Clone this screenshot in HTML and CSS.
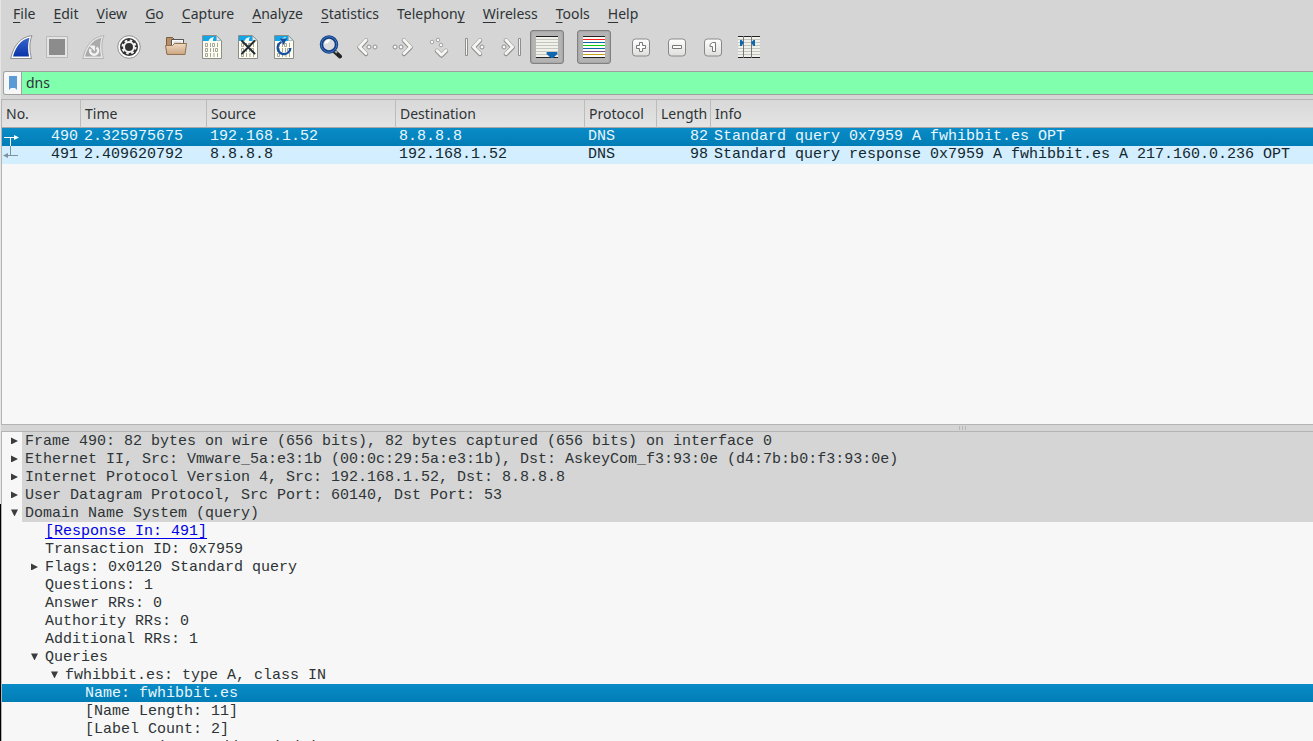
FILE: index.html
```html
<!DOCTYPE html>
<html lang="en">
<head>
  <meta charset="UTF-8">
  <title>dns - Wireshark</title>
  <meta name="viewport" content="width=device-width, initial-scale=1">
  <link rel="stylesheet" href="styles.css">
</head>
<body>
<svg class="defs" width="0" height="0" aria-hidden="true">
  <defs>
    <linearGradient id="fin" x1="0" y1="0" x2="0" y2="1"><stop offset="0" stop-color="#3a66cc"/><stop offset="1" stop-color="#0834a8"/></linearGradient>
    <linearGradient id="wood" x1="0" y1="0" x2="0" y2="1"><stop offset="0" stop-color="#f0d9bf"/><stop offset="1" stop-color="#c9a684"/></linearGradient>
    <linearGradient id="key" x1="0" y1="0" x2="0" y2="1"><stop offset="0" stop-color="#fff"/><stop offset="1" stop-color="#dededb"/></linearGradient>
    <symbol id="page" viewBox="0 0 24 24">
      <path d="M2.500.5h14l5 5v18h-19z" fill="#fdfdf0" stroke="#8c8c88"/>
      <path d="M3 1h13.500v5H3z" fill="#12a5e8"/>
      <path d="M8.500 6Q9.500 2.500 14 2q-1.500 2-1 4z" fill="#f4fbff"/>
      <path d="M16.500 1v4.500H21z" fill="#d9eef6" stroke="#8fa6ae" stroke-width=".7"/>
      <g fill="none" stroke="#9b9b90" stroke-width=".9">
        <path d="M5.500 8.500h2v3h-2zM10.500 8v4M12.500 8.500h2v3h-2zM17.500 8v4M5.500 13.500h2v3h-2zM10.500 13v4M13.500 13v4M15.500 13.500h2v3h-2zM5.500 18.500h2v3h-2zM10.500 18v4M14 18v4M17.500 18v4"/>
      </g>
    </symbol>
    <symbol id="chev" viewBox="0 0 24 24">
      <path d="M11 5.500L4.500 12.500l6.500 6.500" fill="none" stroke="#8f8f8f" stroke-width="4.500" stroke-linecap="round" stroke-linejoin="round"/>
      <path d="M11 5L4.500 12l6.500 6.500" fill="none" stroke="#f6f6f3" stroke-width="3" stroke-linecap="round" stroke-linejoin="round"/>
    </symbol>
  </defs>
</svg>

<nav class="menubar">
  <a href="#file"><u>F</u>ile</a>
  <a href="#edit"><u>E</u>dit</a>
  <a href="#view"><u>V</u>iew</a>
  <a href="#go"><u>G</u>o</a>
  <a href="#capture"><u>C</u>apture</a>
  <a href="#analyze"><u>A</u>nalyze</a>
  <a href="#statistics"><u>S</u>tatistics</a>
  <a href="#telephony">Telephon<u>y</u></a>
  <a href="#wireless"><u>W</u>ireless</a>
  <a href="#tools"><u>T</u>ools</a>
  <a href="#help"><u>H</u>elp</a>
</nav>

<div class="toolbar">
  <div class="group">
    <button aria-label="Start capture"><svg viewBox="0 0 24 24"><path d="M1.700 23.500C4.500 11 11 2 23 .6c-3 7-2.500 15-.5 22.900z" fill="#fff" stroke="#8e8e8e"/><path d="M4 21.500C7 11 12 4.500 20.500 2.700 18.500 9 18.800 15 20 21.500z" fill="url(#fin)"/></svg></button>
    <button aria-label="Stop capture"><svg viewBox="0 0 24 24"><path d="M1.500 1.500h21v21h-21z" fill="#e4e4e4" stroke="#b8b8b8"/><path d="M4 4h16v16H4z" fill="#8c8c8c"/></svg></button>
    <button aria-label="Restart capture"><svg viewBox="0 0 24 24"><path d="M1.700 23.500C4.500 11 11 2 23 .6c-3 7-2.500 15-.5 22.900z" fill="#e8e8e8" stroke="#b4b4b4"/><path d="M4 21.500C7 11 12 4.500 20.500 2.700 18.500 9 18.800 15 20 21.500z" fill="#aaa"/><path d="M9.500 14a4 4 0 1 0 6-1.500" fill="none" stroke="#f2f2f2" stroke-width="2.500"/><path d="M8 10.500h6v6z" fill="#f2f2f2"/></svg></button>
    <button aria-label="Capture options"><svg viewBox="0 0 24 24"><circle cx="12" cy="12" r="11.300" fill="#fafafa" stroke="#909090"/><circle cx="12" cy="12" r="9" fill="#333"/><circle cx="12" cy="12" r="5" fill="none" stroke="#f5f5f5" stroke-width="2"/><circle cx="12" cy="12" r="6.500" fill="none" stroke="#f5f5f5" stroke-width="2" stroke-dasharray="2.550 2.550"/></svg></button>
  </div>
  <div class="group">
    <button aria-label="Open"><svg viewBox="0 0 24 24"><path d="M2.500 18V2.500h6l2 2h9V18z" fill="#b98f68" stroke="#7d5a3b"/><path d="M7.500 4.500h12v8h-12z" fill="#fbfbfb" stroke="#555"/><path d="M9.500 6.500h8v4h-8z" fill="#d7d7d7"/><path d="M1.500 10.500h7l2-2h12l-1.500 11h-18z" fill="url(#wood)" stroke="#94704f"/></svg></button>
    <button aria-label="Save"><svg viewBox="0 0 24 24"><use href="#page"/></svg></button>
    <button aria-label="Close"><svg viewBox="0 0 24 24"><use href="#page"/><path d="M6 6l12.500 12.500M18.500 6L6 18.500" stroke="#222b33" stroke-width="2" stroke-linecap="round"/></svg></button>
    <button aria-label="Reload"><svg viewBox="0 0 24 24"><use href="#page"/><path d="M9.500 7A6.300 6.300 0 1 0 18.300 13" fill="none" stroke="#1450a0" stroke-width="2.400"/><path d="M8 3.500h7L11.500 10z" fill="#1450a0"/></svg></button>
  </div>
  <div class="group">
    <button aria-label="Find packet"><svg viewBox="0 0 24 24"><path d="M15 16l6 5.500" stroke="#222" stroke-width="4" stroke-linecap="round"/><path d="M16 16l2 1.800" stroke="#aaa" stroke-width="2"/><circle cx="10" cy="9.500" r="7.500" fill="#d9dddf" stroke="#153f83" stroke-width="3.500"/><circle cx="10" cy="9.500" r="7.800" fill="none" stroke="#3e78c4" stroke-width="1"/><path d="M5.500 9a5 5 0 0 1 5-4.500c1 2-2 4-5 4.500z" fill="#fff"/></svg></button>
    <button aria-label="Previous packet"><svg viewBox="0 0 24 24"><use href="#chev"/><g fill="#fafafa" stroke="#8f8f8f"><circle cx="14" cy="12" r="2"/><circle cx="20" cy="12" r="2"/></g></svg></button>
    <button aria-label="Next packet"><svg viewBox="0 0 24 24"><g transform="matrix(-1 0 0 1 24 0)"><use href="#chev"/><g fill="#fafafa" stroke="#8f8f8f"><circle cx="14" cy="12" r="2"/><circle cx="20" cy="12" r="2"/></g></g></svg></button>
    <button aria-label="Go to packet"><svg viewBox="0 0 24 24"><g fill="#fafafa" stroke="#a0a0a0"><circle cx="5" cy="7" r="1.800"/><circle cx="11" cy="5" r="1.800"/><circle cx="14" cy="10" r="1.800"/></g><path d="M10 16l4.500 4.500L19 16" fill="none" stroke="#8f8f8f" stroke-width="4.500" stroke-linecap="round" stroke-linejoin="round"/><path d="M10 15.500l4.500 4.500 4.500-4.500" fill="none" stroke="#f6f6f3" stroke-width="3" stroke-linecap="round" stroke-linejoin="round"/></svg></button>
    <button aria-label="First packet"><svg viewBox="0 0 24 24"><path d="M2.500 3.500h2v17h-2z" fill="#f6f6f3" stroke="#8f8f8f"/><use href="#chev" x="6"/><circle cx="19" cy="12" r="2" fill="#fafafa" stroke="#8f8f8f"/></svg></button>
    <button aria-label="Last packet"><svg viewBox="0 0 24 24"><g transform="matrix(-1 0 0 1 24 0)"><path d="M2.500 3.500h2v17h-2z" fill="#f6f6f3" stroke="#8f8f8f"/><use href="#chev" x="6"/><circle cx="19" cy="12" r="2" fill="#fafafa" stroke="#8f8f8f"/></g></svg></button>
    <button class="on" aria-label="Auto scroll" aria-pressed="true"><svg viewBox="0 0 24 24"><path d="M1 1h22v22H1z" fill="#f0f1ea"/><path d="M1 4.500h22M1 7.500h22M1 10.500h22M1 13.500h22M1 16.500h22M1 19.500h22" stroke="#c4c6bd"/><path d="M1 1.500h22M1 22.500h22" stroke="#222"/><path d="M11.500 18q0-1 1-1h9q1 0 1 1v1L18 23h-2l-4.500-4z" fill="#0f67b0"/></svg></button>
  </div>
  <div class="group">
    <button class="on" aria-label="Colorize" aria-pressed="true"><svg viewBox="0 0 24 24"><rect x="1" y="1" width="22" height="22" fill="#fdfdf8"/><g><rect x="1" y="1" width="22" height="1" fill="#222"/><rect x="1" y="4" width="22" height="1" fill="#ff2020"/><rect x="1" y="7" width="22" height="1" fill="#0f67a8"/><rect x="1" y="10" width="22" height="1" fill="#0bd00b"/><rect x="1" y="13" width="22" height="1" fill="#0f67a8"/><rect x="1" y="16" width="22" height="1" fill="#7d4f8c"/><rect x="1" y="19" width="22" height="1" fill="#c4a21a"/><rect x="1" y="22" width="22" height="1" fill="#222"/></g></svg></button>
  </div>
  <div class="group">
    <button aria-label="Zoom in"><svg viewBox="0 0 24 24"><rect x="3.500" y="4" width="17" height="17" rx="3" fill="url(#key)" stroke="#888"/><path d="M10.500 7.500h3v3h3v3h-3v3h-3v-3h-3v-3h3z" fill="#fff" stroke="#777"/></svg></button>
    <button aria-label="Zoom out"><svg viewBox="0 0 24 24"><rect x="3.500" y="4" width="17" height="17" rx="3" fill="url(#key)" stroke="#888"/><path d="M7.500 10.500h9v3h-9z" fill="#fff" stroke="#777"/></svg></button>
    <button aria-label="Normal size"><svg viewBox="0 0 24 24"><rect x="3.500" y="4" width="17" height="17" rx="3" fill="url(#key)" stroke="#888"/><path d="M11.500 7.500h3v9h-3v-5H9v-2z" fill="#fff" stroke="#777"/></svg></button>
    <button aria-label="Resize columns"><svg viewBox="0 0 24 24"><path d="M1 1h22v22H1z" fill="#f0f1ea"/><path d="M1 4.500h22M1 7.500h22M1 10.500h22M1 13.500h22M1 16.500h22M1 19.500h22" stroke="#c4c6bd"/><path d="M1 1.500h22M1 22.500h22" stroke="#222"/><path d="M6.500 1v22M14.500 1v22" stroke="#777"/><path d="M3 5h1.500L7 7.500 4.500 11H3zM18 5h-1.500L14 7.500l2.500 3.500H18z" fill="#0f67b0"/></svg></button>
  </div>
</div>

<form class="filter">
  <button type="button" aria-label="Filter bookmarks"><svg viewBox="0 0 10 16" width="10" height="16"><path d="M1 1h8v14l-2-2H3l-2 2z" fill="#5b9bd5"/></svg></button>
  <input type="text" value="dns" aria-label="Display filter">
</form>

<main>
  <section class="packets">
    <table>
      <colgroup><col class="c-no"><col class="c-time"><col class="c-addr"><col class="c-addr"><col class="c-proto"><col class="c-len"><col></colgroup>
      <thead>
        <tr><th>No.</th><th>Time</th><th>Source</th><th>Destination</th><th>Protocol</th><th>Length</th><th>Info</th></tr>
      </thead>
      <tbody>
        <tr class="selected">
          <td><div class="no"><svg width="18" height="18" viewBox="0 0 18 18"><path d="M2 9.500h11M8.500 9v9" stroke="#fff" fill="none"/><path d="M12 7l5 2.500-5 2.500z" fill="#fff"/></svg>490</div></td>
          <td>2.325975675</td><td>192.168.1.52</td><td>8.8.8.8</td><td>DNS</td><td>82</td>
          <td>Standard query 0x7959 A fwhibbit.es OPT</td>
        </tr>
        <tr>
          <td><div class="no"><svg width="18" height="18" viewBox="0 0 18 18"><path d="M4 9.500h12M8.500 0v9" stroke="#7f939e" fill="none"/><path d="M6 7L1 9.500 6 12z" fill="#7f939e"/></svg>491</div></td>
          <td>2.409620792</td><td>8.8.8.8</td><td>192.168.1.52</td><td>DNS</td><td>98</td>
          <td>Standard query response 0x7959 A fwhibbit.es A 217.160.0.236 OPT</td>
        </tr>
      </tbody>
    </table>
  </section>

  <div class="splitter"><i></i><i></i><i></i></div>

  <section class="details">
    <div class="row top"><button class="closed" aria-label="Expand"></button><span>Frame 490: 82 bytes on wire (656 bits), 82 bytes captured (656 bits) on interface 0</span></div>
    <div class="row top"><button class="closed" aria-label="Expand"></button><span>Ethernet II, Src: Vmware_5a:e3:1b (00:0c:29:5a:e3:1b), Dst: AskeyCom_f3:93:0e (d4:7b:b0:f3:93:0e)</span></div>
    <div class="row top"><button class="closed" aria-label="Expand"></button><span>Internet Protocol Version 4, Src: 192.168.1.52, Dst: 8.8.8.8</span></div>
    <div class="row top"><button class="closed" aria-label="Expand"></button><span>User Datagram Protocol, Src Port: 60140, Dst Port: 53</span></div>
    <div class="row top"><button class="open" aria-label="Collapse"></button><span>Domain Name System (query)</span></div>
    <div class="level">
      <div class="row leaf"><span><a href="#491">[Response In: 491]</a></span></div>
      <div class="row leaf"><span>Transaction ID: 0x7959</span></div>
      <div class="row"><button class="closed" aria-label="Expand"></button><span>Flags: 0x0120 Standard query</span></div>
      <div class="row leaf"><span>Questions: 1</span></div>
      <div class="row leaf"><span>Answer RRs: 0</span></div>
      <div class="row leaf"><span>Authority RRs: 0</span></div>
      <div class="row leaf"><span>Additional RRs: 1</span></div>
      <div class="row"><button class="open" aria-label="Collapse"></button><span>Queries</span></div>
      <div class="level">
        <div class="row"><button class="open" aria-label="Collapse"></button><span>fwhibbit.es: type A, class IN</span></div>
      </div>
    </div>
    <div class="row deep selected"><span>Name: fwhibbit.es</span></div>
    <div class="row deep"><span>[Name Length: 11]</span></div>
    <div class="row deep"><span>[Label Count: 2]</span></div>
    <div class="row deep"><span>Type: A (Host Address) (1)</span></div>
  </section>
</main>
</body>
</html>
```
FILE: styles.css
```css
* { box-sizing: border-box; }
body { margin: 0; height: 100vh; overflow: hidden; display: flex; flex-direction: column; background: linear-gradient(#e6e6e6 68%, #000 68%) 0 0 / 1px 100% no-repeat #d5d5d5; color: #2e3436; font: 14px/20px "Noto Sans", "Open Sans", sans-serif; }
button { border: 0; padding: 0; background: none; }
.defs { position: absolute; }

.menubar { display: flex; gap: 18px; height: 28px; padding: 4px 13px; }
.menubar a { color: inherit; text-decoration: none; }
.menubar u { text-underline-offset: 3px; }

.toolbar { display: flex; gap: 13px; padding: 2px 4px 7px; }
.group { display: flex; gap: 2px; }
.toolbar button { display: grid; place-items: center; width: 34px; height: 34px; border: 1px solid transparent; border-radius: 3px; }
.toolbar button.on { background: #b4b4b4; border-color: #808080; box-shadow: inset 0 0 2px #888; }
.toolbar svg { width: 24px; height: 24px; }

.filter { display: flex; height: 24px; margin: 0 0 4px 3px; border: 1px solid #a0a0a0; border-right: 0; border-radius: 3px 0 0 3px; background: #80ffac; overflow: hidden; }
.filter button { display: grid; place-items: center; width: 18px; background: #f7f7f7; border-right: 1px solid #a0a0a0; }
.filter input { flex: 1; border: 0; padding: 0 4px; background: none; color: inherit; font: inherit; outline: 0; }

main { flex: 1; min-height: 0; display: flex; flex-direction: column; margin-left: 1px; }
.packets { flex: 325 0 0; min-height: 0; border: 1px solid #b4b4b4; border-right: 0; background: #f7f7f7; }
table { width: 100%; table-layout: fixed; border-collapse: separate; border-spacing: 0; }
.c-no { width: 79px; }
.c-time { width: 126px; }
.c-addr { width: 189px; }
.c-proto { width: 72px; }
.c-len { width: 54px; }
th { height: 28px; padding: 0 4px; border-right: 1px solid #bcbcbc; border-bottom: 1px solid #a8a8a8; background: linear-gradient(#d8d8d8, #e4e4e4); text-align: left; font-weight: normal; }
th:last-child { border-right: 0; }
td { height: 18px; padding: 0 3px; background: #d2eeff; color: #12272e; font: 15px/18px "Liberation Mono", monospace; white-space: nowrap; }
td:nth-child(6) { text-align: right; }
.packets .selected td { background: linear-gradient(#0a8cc8, #007db5); color: #eaf6fc; }
.no { display: flex; justify-content: space-between; margin-left: -3px; }

.splitter { display: flex; gap: 2px; height: 6px; padding: 1px 0 1px 73%; }
.splitter i { width: 1px; background: #b8b8b8; }

.details { flex: 310 0 0; min-height: 0; overflow: hidden; border: solid #b4b4b4; border-width: 1px 0 0 1px; background: #f7f7f7; font: 15px/20px "Liberation Mono", monospace; white-space: nowrap; }
.row { display: flex; height: 18px; }
.row span { flex: 1; padding-left: 3px; }
.top span { background: #d5d5d5; }
.level { padding-left: 20px; }
.leaf { padding-left: 20px; }
.deep { padding-left: 80px; }
.details .selected { background: linear-gradient(#0a8cc8, #007db5); color: #eaf6fc; }
.details a { color: #0000e8; text-underline-offset: 3px; }
.row button { display: flex; align-items: center; width: 20px; padding-left: 9px; }
.row button::before { content: ""; width: 7px; height: 7px; background: #3c3c3c; }
.row .closed::before { clip-path: polygon(0 0, 100% 50%, 0 100%); }
.row .open::before { clip-path: polygon(0 0, 100% 0, 50% 100%); }
```
